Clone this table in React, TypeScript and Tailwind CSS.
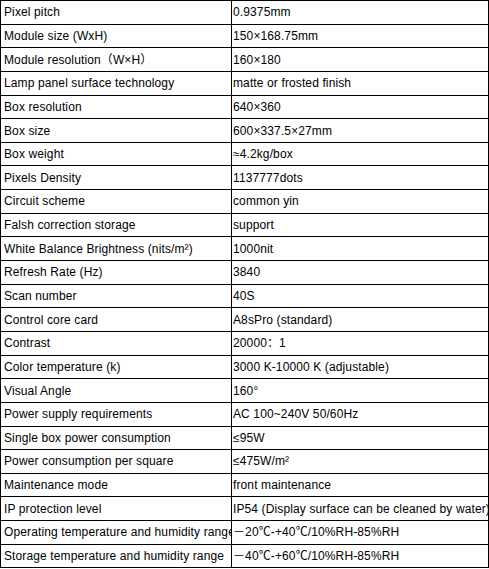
const specs: [string, string][] = [
  ["Pixel pitch", "0.9375mm"],
  ["Module size (WxH)", "150×168.75mm"],
  ["Module resolution（W×H）", "160×180"],
  ["Lamp panel surface technology", "matte or frosted finish"],
  ["Box resolution", "640×360"],
  ["Box size", "600×337.5×27mm"],
  ["Box weight", "≈4.2kg/box"],
  ["Pixels Density", "1137777dots"],
  ["Circuit scheme", "common yin"],
  ["Falsh correction storage", "support"],
  ["White Balance Brightness  (nits/m²)", "1000nit"],
  ["Refresh Rate (Hz)", "3840"],
  ["Scan number", "40S"],
  ["Control core card", "A8sPro (standard)"],
  ["Contrast", "20000：1"],
  ["Color temperature (k)", "3000 K-10000 K (adjustable)"],
  ["Visual Angle", "160°"],
  ["Power supply requirements", "AC 100~240V 50/60Hz"],
  ["Single box power consumption", "≤95W"],
  ["Power consumption per square", "≤475W/m²"],
  ["Maintenance mode", "front maintenance"],
  ["IP protection level", "IP54 (Display surface can be cleaned by water)"],
  ["Operating temperature and humidity range", "－20℃-+40℃/10%RH-85%RH"],
  ["Storage temperature and humidity range", "－40℃-+60℃/10%RH-85%RH"],
];

export default function App() {
  return (
    <div className="w-[489px] h-[569px] overflow-hidden bg-white">
      <div
        className="w-[489px] border-t border-l border-r border-black text-[12px] tracking-[0.12px] text-black"
        style={{ fontFamily: '"Liberation Sans", Arial, "Noto Sans CJK SC", sans-serif' }}
      >
        {specs.map(([label, value]) => (
          <div key={label} className="flex h-[23.65px] border-b border-black">
            <div className="w-[231px] shrink-0 border-r border-black pl-[3px] flex items-center overflow-hidden whitespace-nowrap">
              {label}
            </div>
            <div className="flex-1 pl-[1px] flex items-center overflow-hidden whitespace-nowrap">
              {value}
            </div>
          </div>
        ))}
      </div>
    </div>
  );
}
